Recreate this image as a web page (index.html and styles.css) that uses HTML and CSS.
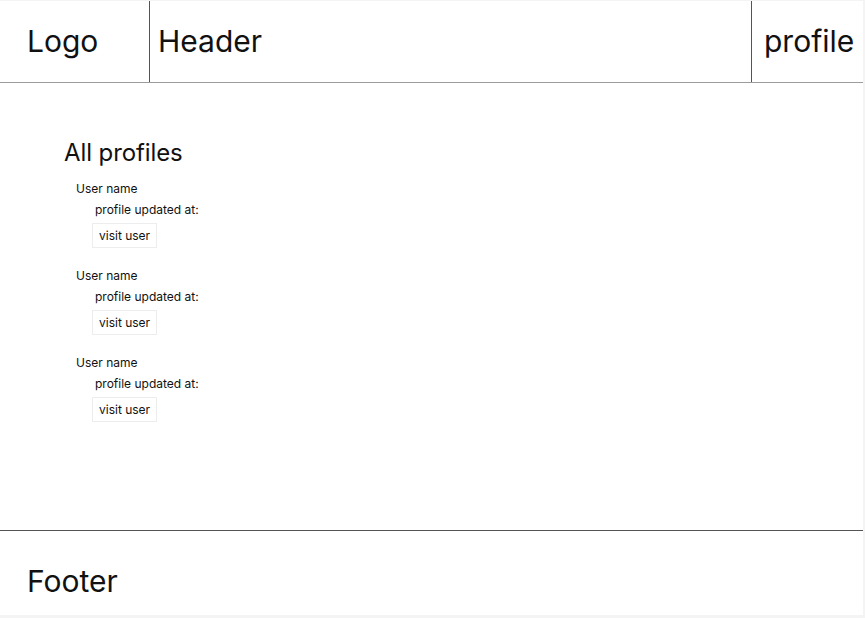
FILE: index.html
```html
<!DOCTYPE html>
<html lang="en">
<head>
<meta charset="utf-8">
<title>All profiles</title>
<link rel="stylesheet" href="styles.css">
</head>
<body>
<div class="frame">
  <header class="topbar">
    <div class="logo">Logo</div>
    <div class="title">Header</div>
    <div class="profile">profile</div>
  </header>
  <main class="content">
    <h1 class="heading">All profiles</h1>
    <ul class="users">
      <li class="user">
        <div class="user-name">User name</div>
        <div class="updated">profile updated at:</div>
        <button class="visit">visit user</button>
      </li>
      <li class="user">
        <div class="user-name">User name</div>
        <div class="updated">profile updated at:</div>
        <button class="visit">visit user</button>
      </li>
      <li class="user">
        <div class="user-name">User name</div>
        <div class="updated">profile updated at:</div>
        <button class="visit">visit user</button>
      </li>
    </ul>
  </main>
  <footer class="footer">Footer</footer>
</div>
</body>
</html>
```
FILE: styles.css
```css
html, body {
  margin: 0;
  padding: 0;
}
body {
  background: #f4f4f4;
  font-family: Inter, "Liberation Sans", sans-serif;
  color: #111;
}
.frame {
  margin-top: 1px;
  width: 863px;
  height: 614px;
  background: #fff;
  display: flex;
  flex-direction: column;
}
.topbar {
  height: 81px;
  border-bottom: 1px solid #9c9c9c;
  display: flex;
  align-items: stretch;
  font-size: 30px;
  line-height: 34px;
}
.topbar > div {
  display: flex;
  align-items: center;
  padding-bottom: 2px;
}
.logo {
  width: 122px;
  padding-left: 27px;
  border-right: 1px solid #555;
}
.title {
  flex: 1;
  padding-left: 8px;
  border-right: 1px solid #555;
}
.profile {
  width: 99px;
  padding-left: 12px;
}
.content {
  flex: 1;
  padding: 55px 0 0 64px;
}
.heading {
  margin: 0;
  font-size: 24px;
  font-weight: 400;
  line-height: 29px;
  letter-spacing: -0.1px;
}
.users {
  list-style: none;
  margin: 14px 0 0 12px;
  padding: 0;
  display: flex;
  flex-direction: column;
  gap: 20px;
  font-size: 12px;
  line-height: 16px;
}
.user {
  display: flex;
  flex-direction: column;
  align-items: flex-start;
}
.updated {
  margin-top: 5px;
  padding-left: 19px;
}
.visit {
  margin: 5px 0 0 16px;
  font: inherit;
  font-size: 12px;
  line-height: 15px;
  color: #111;
  background: #fff;
  border: 1px solid #ededed;
  padding: 4px 6px;
  height: 25px;
  white-space: nowrap;
  text-align: left;
}
.footer {
  height: 52px;
  border-top: 1px solid #555;
  padding: 32px 0 0 27px;
  font-size: 30px;
  line-height: 36px;
}
```
